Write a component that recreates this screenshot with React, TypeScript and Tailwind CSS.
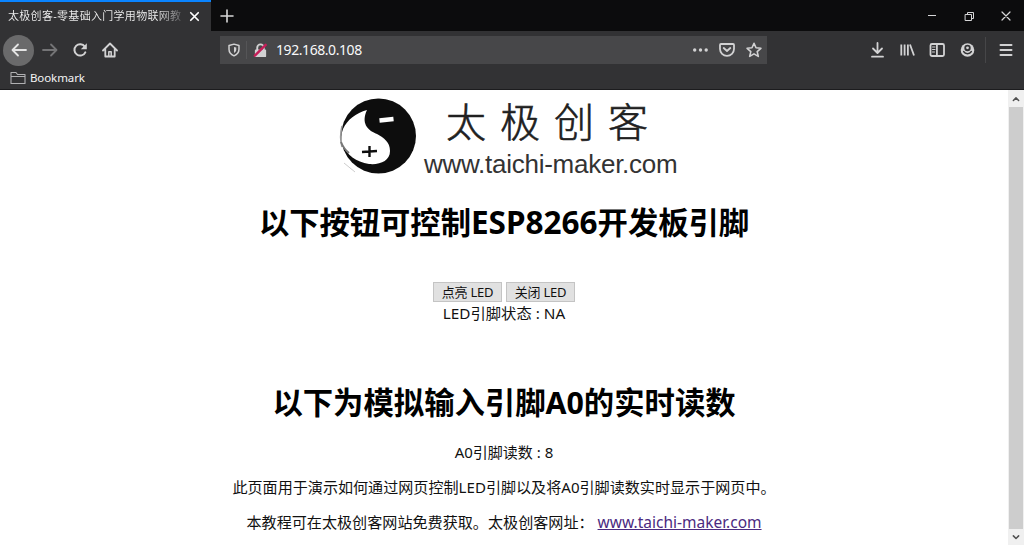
import React from "react";

const Icon = ({ children, className = "", size = 16 }: { children: React.ReactNode; className?: string; size?: number }) => (
  <svg width={size} height={size} viewBox="0 0 16 16" fill="none" stroke="currentColor" strokeWidth="1.8" strokeLinecap="round" strokeLinejoin="round" className={`shrink-0 ${className}`}>
    {children}
  </svg>
);

function TitleBar() {
  return (
    <div className="flex h-[31px] items-stretch bg-[#0c0c0d]">
      <div className="flex w-[211px] items-center border-t-2 border-[#0a84ff] bg-[#323234] pl-[8px]">
        <span className="w-[178px] bg-linear-to-r from-[#f4f4f4] from-84% to-[#48484a] bg-clip-text text-[11px] tracking-[0.300px] whitespace-nowrap text-transparent">
          太极创客-零基础入门学用物联网教
        </span>
        <Icon size={15} className="ml-[1px] text-white"><path d="M4 4l8 8M12 4l-8 8" /></Icon>
      </div>
      <div className="flex flex-1 items-center pl-[8px] text-[#d7d7d8]">
        <Icon><path d="M8 2v12M2 8h12" strokeWidth="1.6" /></Icon>
        <div className="ml-auto flex items-center gap-[21px] pr-[10px]">
          <Icon><path d="M4 7.500h8" strokeWidth="1" strokeLinecap="butt" /></Icon>
          <Icon><path d="M4.500 6.500h6v6h-6zM6.500 6V4.500h6v6H11" strokeWidth="1" /></Icon>
          <Icon><path d="M4 4l8 8M12 4l-8 8" strokeWidth="1.2" /></Icon>
        </div>
      </div>
    </div>
  );
}

function Toolbar() {
  return (
    <div className="flex h-[38px] items-center text-[#d2d2d3]">
      <div className="ml-[3px] flex size-[31px] items-center justify-center rounded-full bg-[#6a6a6b] text-[#e4e4e4]">
        <Icon><path d="M15 8H2M7 2.500L1.500 8 7 13.500" /></Icon>
      </div>
      <Icon className="ml-[8px] text-[#747476]"><path d="M1 8h13M9 2.500L14.500 8 9 13.500" /></Icon>
      <Icon className="ml-[14px]">
        <path d="M13.300 10.300A5.700 5.700 0 1 1 12.800 4.600" strokeWidth="2" />
        <path d="M14.800 1.200v6H8.800z" fill="currentColor" stroke="none" />
      </Icon>
      <Icon className="ml-[14px]">
        <path d="M1 8.500L8 1.500l7 7M3.300 7.500v7h9.400v-7" />
        <path d="M6.800 14V9.800h2.400V14" strokeWidth="1.500" />
      </Icon>
      <div className="ml-[102px] flex h-[28px] w-[547px] items-center bg-[#474749]">
        <Icon size={14} className="ml-[7px]">
          <path d="M8 1.300l5.700 1.500v4.400c0 3.500-2.200 6-5.700 7.500-3.500-1.500-5.700-4-5.700-7.500V2.800z" strokeWidth="1.700" />
          <path d="M8 4.500v7c1.700-1 2.600-2.400 2.600-4V5.200z" fill="currentColor" stroke="none" />
        </Icon>
        <span className="ml-[5px] h-[18px] w-px bg-[#555557]" />
        <Icon size={15} className="ml-[6px]">
          <path d="M4.500 8V5a3.500 3.500 0 0 1 7 0v3" strokeWidth="2" />
          <rect x="2" y="7" width="12" height="8" rx="1" fill="currentColor" stroke="none" />
          <path d="M2 13.500L13.500 2" stroke="#c51d58" strokeWidth="2.600" />
        </Icon>
        <span className="ml-[8px] pb-px text-[14px] tracking-[-0.430px] text-[#f9f9fa]">192.168.0.108</span>
        <div className="ml-auto flex items-center gap-[11px] pr-[5px]">
          <Icon>
            <g fill="currentColor" stroke="none"><circle cx="2.700" cy="8" r="1.700" /><circle cx="8.500" cy="8" r="1.700" /><circle cx="14.200" cy="8" r="1.700" /></g>
          </Icon>
          <Icon><path d="M2 2h12a1 1 0 0 1 1 1v4A7 6.800 0 0 1 1 7V3a1 1 0 0 1 1-1zM4.700 6L8 9l3.300-3" /></Icon>
          <Icon><path d="M8 1.300l2 4.500 4.900.5-3.700 3.300 1.100 4.800L8 11.900l-4.300 2.500 1.100-4.800L1.100 6.300 6 5.800z" strokeWidth="1.600" /></Icon>
        </div>
      </div>
      <div className="ml-auto flex items-center gap-[14px] pr-[10px]">
        <Icon><path d="M8.500 1v9.500M4 6.500L8.500 11 13 6.500M3 14.700h11" /></Icon>
        <Icon><path d="M2.300 2.500v11M5.600 2.500v11M8.900 2.500v11M11 2.500l4 11" strokeLinecap="butt" /></Icon>
        <Icon>
          <rect x="1.500" y="2" width="13.500" height="12" rx="1.500" />
          <path d="M7.900 2v12" />
          <path d="M3.500 5h2.500M3.500 7.500h2.500M3.500 10h2" strokeWidth="1" />
        </Icon>
        <Icon>
          <circle cx="8.500" cy="8" r="6.800" fill="currentColor" stroke="none" />
          <circle cx="8.500" cy="6" r="3.200" fill="#323234" stroke="none" />
          <circle cx="8.500" cy="5.800" r="1.400" fill="currentColor" stroke="none" />
          <path d="M4.700 9.700c1.600 2.700 6 2.700 7.600 0" stroke="#323234" strokeWidth="1.600" />
        </Icon>
        <div className="ml-[-4px] flex items-center gap-[12px]">
          <span className="h-[26px] w-px bg-[#464648]" />
          <Icon><path d="M2.500 3h11M2.500 8h11M2.500 13h11" strokeWidth="2" /></Icon>
        </div>
      </div>
    </div>
  );
}

function Logo() {
  return (
    <div className="flex h-[92px] w-[334px] pt-[4px]">
      <svg width="84" height="84" viewBox="0 0 84 84" className="shrink-0">
        <defs>
          <filter id="ink" x="-20%" y="-20%" width="140%" height="140%"><feGaussianBlur stdDeviation="0.600" /></filter>
        </defs>
        <g filter="url(#ink)">
          <circle cx="41.500" cy="42" r="37.500" fill="#111" />
          <path d="M30 16C19 19 10 26 6 35c-2 5-2 10-1 15 5 11 14 18 27 20 11 1 21-3 21-13 0-9-6-13-13-17C30 36 24 29 30 16z" fill="#fff" />
          <path d="M5 32c-2 8-2 14 0 21" fill="none" stroke="#999" strokeWidth="1.500" />
          <path d="M4 48c2 5 4 8 8 11" fill="none" stroke="#777" strokeWidth="2" />
          <path d="M7 69l11 9" fill="none" stroke="#ccc" strokeWidth="1" />
          <path d="M42.500 26.500L56.500 25" stroke="#fff" strokeWidth="4.500" />
          <path d="M25 58L40 57M32.500 52v11" stroke="#111" strokeWidth="2.400" />
        </g>
      </svg>
      <div className="flex flex-col">
        <div className="ml-[25px] h-[55px] pt-[1px] text-[40px] leading-[50px] font-light tracking-[14px] whitespace-nowrap text-[#202020] [-webkit-text-stroke:0.6px_#202020] [font-family:'Noto_Sans_CJK_SC_Light','Noto_Sans_CJK_SC',sans-serif]">太极创客</div>
        <div className="ml-[3px] text-[26px] leading-[30px] tracking-[-0.260px] whitespace-nowrap text-[#333] [font-family:'Liberation_Sans',sans-serif]">www.taichi-maker.com</div>
      </div>
    </div>
  );
}

function Page() {
  return (
    <main className="flex flex-1 flex-col items-center bg-white text-[15px] leading-[20px] whitespace-nowrap text-[#111]">
      <Logo />
      <h1 className="mt-[15px] h-[50px] text-[30.300px] leading-[50px] font-bold text-black">以下按钮可控制<span className="text-[31.500px]">ESP8266</span>开发板引脚</h1>
      <div className="mt-[35px] flex h-[21px] gap-[4px] text-[13px] leading-[18px]">
        <button className="h-[20px] w-[69px] border border-[#c4c4c4] bg-[#e1e1e1] tracking-[-0.200px]">点亮 LED</button>
        <button className="h-[20px] w-[69px] border border-[#c4c4c4] bg-[#e1e1e1] tracking-[-0.200px]">关闭 LED</button>
      </div>
      <p className="text-[15.300px]">LED引脚状态 : NA</p>
      <h1 className="mt-[55px] h-[50px] text-[30.350px] leading-[50px] font-bold text-black">以下为模拟输入引脚A0的实时读数</h1>
      <p className="mt-[14px]">A0引脚读数 : 8</p>
      <p className="mt-[15px] text-[15.080px]">此页面用于演示如何通过网页控制LED引脚以及将A0引脚读数实时显示于网页中。</p>
      <p className="mt-[15px] text-[15.100px]">
        本教程可在太极创客网站免费获取。太极创客网址：{" "}
        <a href="#" className="text-[15.500px] text-[#4b2a80] underline">www.taichi-maker.com</a>
      </p>
    </main>
  );
}

function Scrollbar() {
  return (
    <div className="flex w-[16px] flex-col items-center bg-[#f0f0f0] text-[#505050]">
      <div className="flex h-[17px] items-center"><Icon size={12}><path d="M4.500 10L8 6.500l3.500 3.500" strokeWidth="2" /></Icon></div>
      <div className="w-[14px] flex-1 bg-[#cdcdcd]" />
      <div className="flex h-[16px] items-center"><Icon size={12}><path d="M4.500 6.500L8 10l3.500-3.500" strokeWidth="2" /></Icon></div>
    </div>
  );
}

export default function App() {
  return (
    <div className="flex h-[545px] w-[1024px] flex-col overflow-hidden bg-[#323234] [font-family:'Noto_Sans','Noto_Sans_CJK_SC',sans-serif]">
      <TitleBar />
      <Toolbar />
      <div className="flex h-[21px] items-start border-b border-[#1c1c1e] pl-[10px] text-[#f4f4f5]">
        <Icon size={16} className="mt-[1px] text-[#b0b0b2]"><path d="M1 13.500v-11h5l1.500 2H15v9zM1 6.500h14" strokeWidth="1.100" /></Icon>
        <span className="ml-[4px] text-[11.500px] leading-[18px] tracking-[-0.100px]">Bookmark</span>
      </div>
      <div className="flex flex-1">
        <Page />
        <Scrollbar />
      </div>
    </div>
  );
}
